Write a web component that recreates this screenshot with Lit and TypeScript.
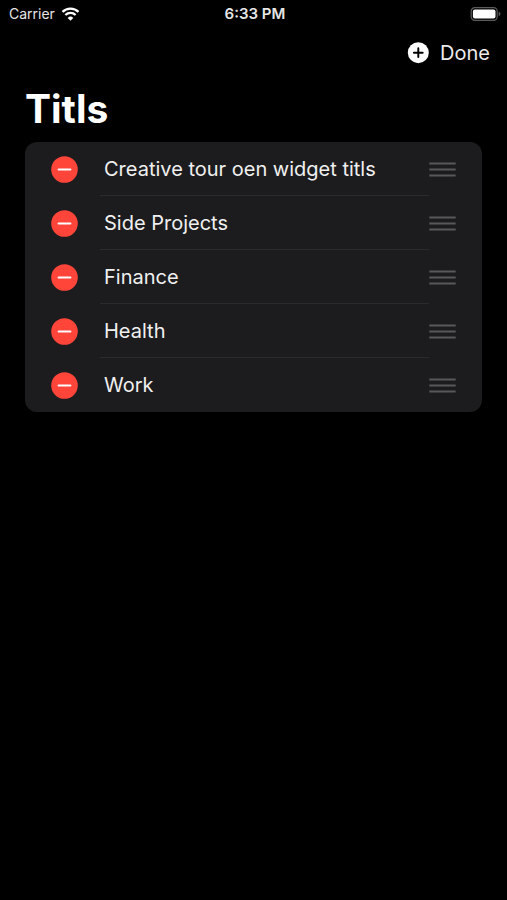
import { LitElement, html, css, svg } from "lit";
import { customElement, state } from "lit/decorators.js";

const wifi = svg`<svg class="wifi" width="19" height="14" viewBox="0 0 18 14" aria-hidden="true">
  <path d="M1 4.9 A11.4 11.4 0 0 1 17 4.9" fill="none" stroke="currentColor" stroke-width="2.3"/>
  <path d="M3.9 8 A7.3 7.3 0 0 1 14.1 8" fill="none" stroke="currentColor" stroke-width="2.3"/>
  <path d="M9 13.8 L6.2 10.9 A4 4 0 0 1 11.8 10.9 Z" fill="currentColor"/>
</svg>`;

const battery = svg`<svg class="battery" width="31" height="14" viewBox="0 0 31 14" aria-hidden="true">
  <rect x="1.2" y="0.7" width="26" height="12.6" rx="3.6" fill="none" stroke="#5c5c5e" stroke-width="1.2"/>
  <rect x="2.9" y="2.4" width="22.6" height="9.2" rx="2" fill="#fff"/>
  <path d="M28.7 4.8 Q30.5 5.4 30.5 7 Q30.5 8.6 28.7 9.2 Z" fill="#5c5c5e"/>
</svg>`;

const plus = svg`<svg width="22" height="22" viewBox="0 0 22 22" aria-hidden="true">
  <circle cx="11.3" cy="10.7" r="10.5" fill="#fff"/>
  <path d="M11.3 6.3 V15.1 M6.9 10.7 H15.7" stroke="#000" stroke-width="1.9" stroke-linecap="round"/>
</svg>`;

const minus = svg`<svg width="27" height="27" viewBox="0 0 27 27" aria-hidden="true">
  <circle cx="13.5" cy="13.5" r="13.3" fill="#ff453a"/>
  <path d="M7.6 13.5 H19.4" stroke="#fff" stroke-width="2.1" stroke-linecap="round"/>
</svg>`;

const grip = svg`<svg width="27" height="16" viewBox="0 0 27 16" aria-hidden="true">
  <path d="M0.3 2.5 H26.7 M0.3 8.5 H26.7 M0.3 14.5 H26.7" stroke="#58585b" stroke-width="1.9"/>
</svg>`;

@customElement("app-root")
export class AppRoot extends LitElement {
  @state() private items = [
    "Creative tour oen widget titls",
    "Side Projects",
    "Finance",
    "Health",
    "Work",
  ];

  static styles = css`
    :host {
      display: block;
      min-height: 100vh;
      background: #000;
      color: #fff;
      font-family: Inter, "Liberation Sans", sans-serif;
    }
    button {
      padding: 0;
      border: 0;
      background: none;
      color: inherit;
      font: inherit;
      cursor: pointer;
    }
    svg {
      display: block;
    }
    .status {
      display: grid;
      grid-template-columns: 1fr auto 1fr;
      align-items: center;
      height: 27px;
      padding: 0 6px 0 9px;
      font-size: 14px;
      color: #e6e6e6;
    }
    .carrier {
      display: flex;
      align-items: center;
      gap: 6px;
    }
    .wifi {
      color: #fff;
    }
    .time {
      font-size: 15px;
      font-weight: 600;
    }
    .battery {
      justify-self: end;
    }
    .toolbar {
      display: flex;
      justify-content: flex-end;
      align-items: center;
      gap: 11px;
      height: 52px;
      padding: 0 17px;
      font-size: 20px;
      color: #ececec;
    }
    .title {
      margin: 0;
      padding: 6px 25px 9px;
      font-size: 39px;
      line-height: 48px;
      font-weight: 700;
    }
    .list {
      margin: 0 25px;
      padding: 0;
      list-style: none;
      border-radius: 12px;
      background: #1c1c1e;
      overflow: hidden;
    }
    .row {
      display: flex;
      align-items: center;
      height: 54px;
      padding: 0 26px;
    }
    .label {
      flex: 1;
      align-self: stretch;
      display: flex;
      align-items: center;
      box-sizing: border-box;
      margin-left: 22px;
      padding-left: 4px;
      padding-top: 1px;
      border-bottom: 1px solid transparent;
      font-size: 20px;
      color: #f0f0f0;
      white-space: nowrap;
    }
    .row:not(:last-child) .label {
      border-bottom-color: #2b2b2d;
    }
    .grip {
      cursor: grab;
    }
  `;

  private remove(index: number) {
    this.items = this.items.filter((_, i) => i !== index);
  }

  private add() {
    this.items = [...this.items, "New"];
  }

  render() {
    return html`
      <header>
        <div class="status">
          <div class="carrier"><span>Carrier</span>${wifi}</div>
          <span class="time">6:33 PM</span>
          ${battery}
        </div>
        <nav class="toolbar">
          <button type="button" aria-label="Add" @click=${this.add}>${plus}</button>
          <button type="button">Done</button>
        </nav>
      </header>
      <main>
        <h1 class="title">Titls</h1>
        <ul class="list">
          ${this.items.map(
            (item, i) => html`
              <li class="row">
                <button type="button" aria-label="Delete ${item}" @click=${() => this.remove(i)}>
                  ${minus}
                </button>
                <span class="label">${item}</span>
                <button type="button" class="grip" aria-label="Reorder ${item}">${grip}</button>
              </li>
            `
          )}
        </ul>
      </main>
    `;
  }
}
